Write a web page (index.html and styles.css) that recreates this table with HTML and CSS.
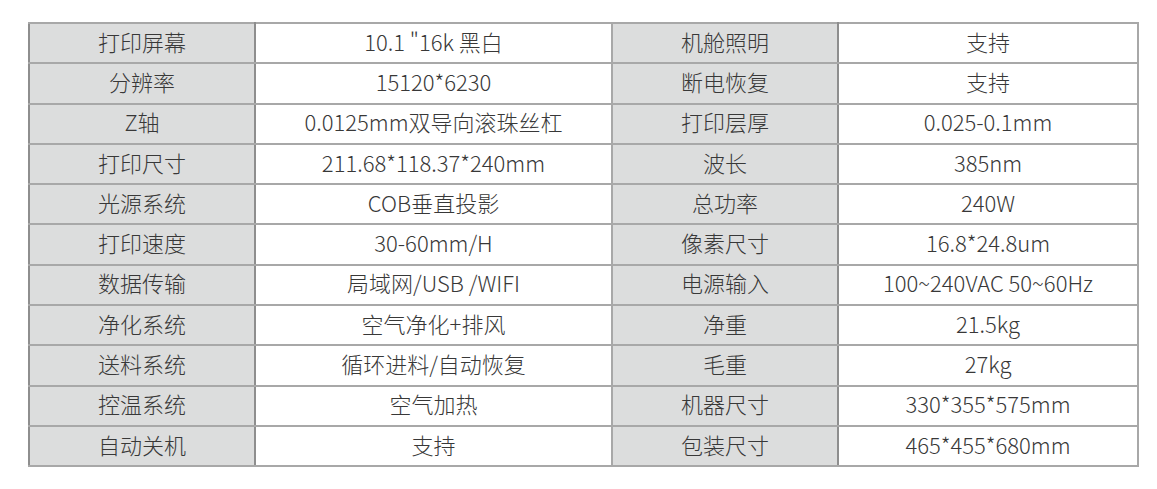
FILE: index.html
```html
<!DOCTYPE html>
<html lang="zh-CN">
<head>
<meta charset="utf-8">
<link rel="stylesheet" href="styles.css">
</head>
<body>
<table class="spec">
<colgroup><col class="c1"><col class="c2"><col class="c3"><col class="c4"></colgroup>
<tbody>
<tr><th>打印屏幕</th><td>10.1 "16k 黑白</td><th>机舱照明</th><td>支持</td></tr>
<tr><th>分辨率</th><td>15120*6230</td><th>断电恢复</th><td>支持</td></tr>
<tr><th>Z轴</th><td>0.0125mm双导向滚珠丝杠</td><th>打印层厚</th><td>0.025-0.1mm</td></tr>
<tr><th>打印尺寸</th><td>211.68*118.37*240mm</td><th>波长</th><td>385nm</td></tr>
<tr><th>光源系统</th><td>COB垂直投影</td><th>总功率</th><td>240W</td></tr>
<tr><th>打印速度</th><td>30-60mm/H</td><th>像素尺寸</th><td>16.8*24.8um</td></tr>
<tr><th>数据传输</th><td>局域网/USB /WIFI</td><th>电源输入</th><td>100~240VAC 50~60Hz</td></tr>
<tr><th>净化系统</th><td>空气净化+排风</td><th>净重</th><td>21.5kg</td></tr>
<tr><th>送料系统</th><td>循环进料/自动恢复</td><th>毛重</th><td>27kg</td></tr>
<tr><th>控温系统</th><td>空气加热</td><th>机器尺寸</th><td>330*355*575mm</td></tr>
<tr><th>自动关机</th><td>支持</td><th>包装尺寸</th><td>465*455*680mm</td></tr>
</tbody>
</table>
</body>
</html>
```
FILE: styles.css
```css
html, body {
  margin: 0;
  padding: 0;
  background: #ffffff;
}
body {
  padding: 22px 0 0 28px;
  font-family: "Noto Sans CJK SC", "Noto Sans", sans-serif;
  color: #383838;
}
.spec {
  border-collapse: collapse;
  table-layout: fixed;
  width: 1109px;
  border-top: 2px solid #8a8a8a;
  border-left: 2px solid #8a8a8a;
  border-bottom: 2px solid #8a8a8a;
  border-right: 2px solid #aaaaaa;
}
.c1 { width: 226px; }
.c2 { width: 357px; }
.c3 { width: 226px; }
.c4 { width: 300px; }
.spec th, .spec td {
  height: 33.3px;
  padding: 0 0 5px 0;
  border: 2px solid #a8a8a8;
  text-align: center;
  vertical-align: middle;
  font-size: 22px;
  font-weight: 300;
  line-height: 24px;
  white-space: nowrap;
}
.spec th {
  background: #dcdddd;
  border-left-color: #8e8e8e;
  border-right-color: #8e8e8e;
}
```
